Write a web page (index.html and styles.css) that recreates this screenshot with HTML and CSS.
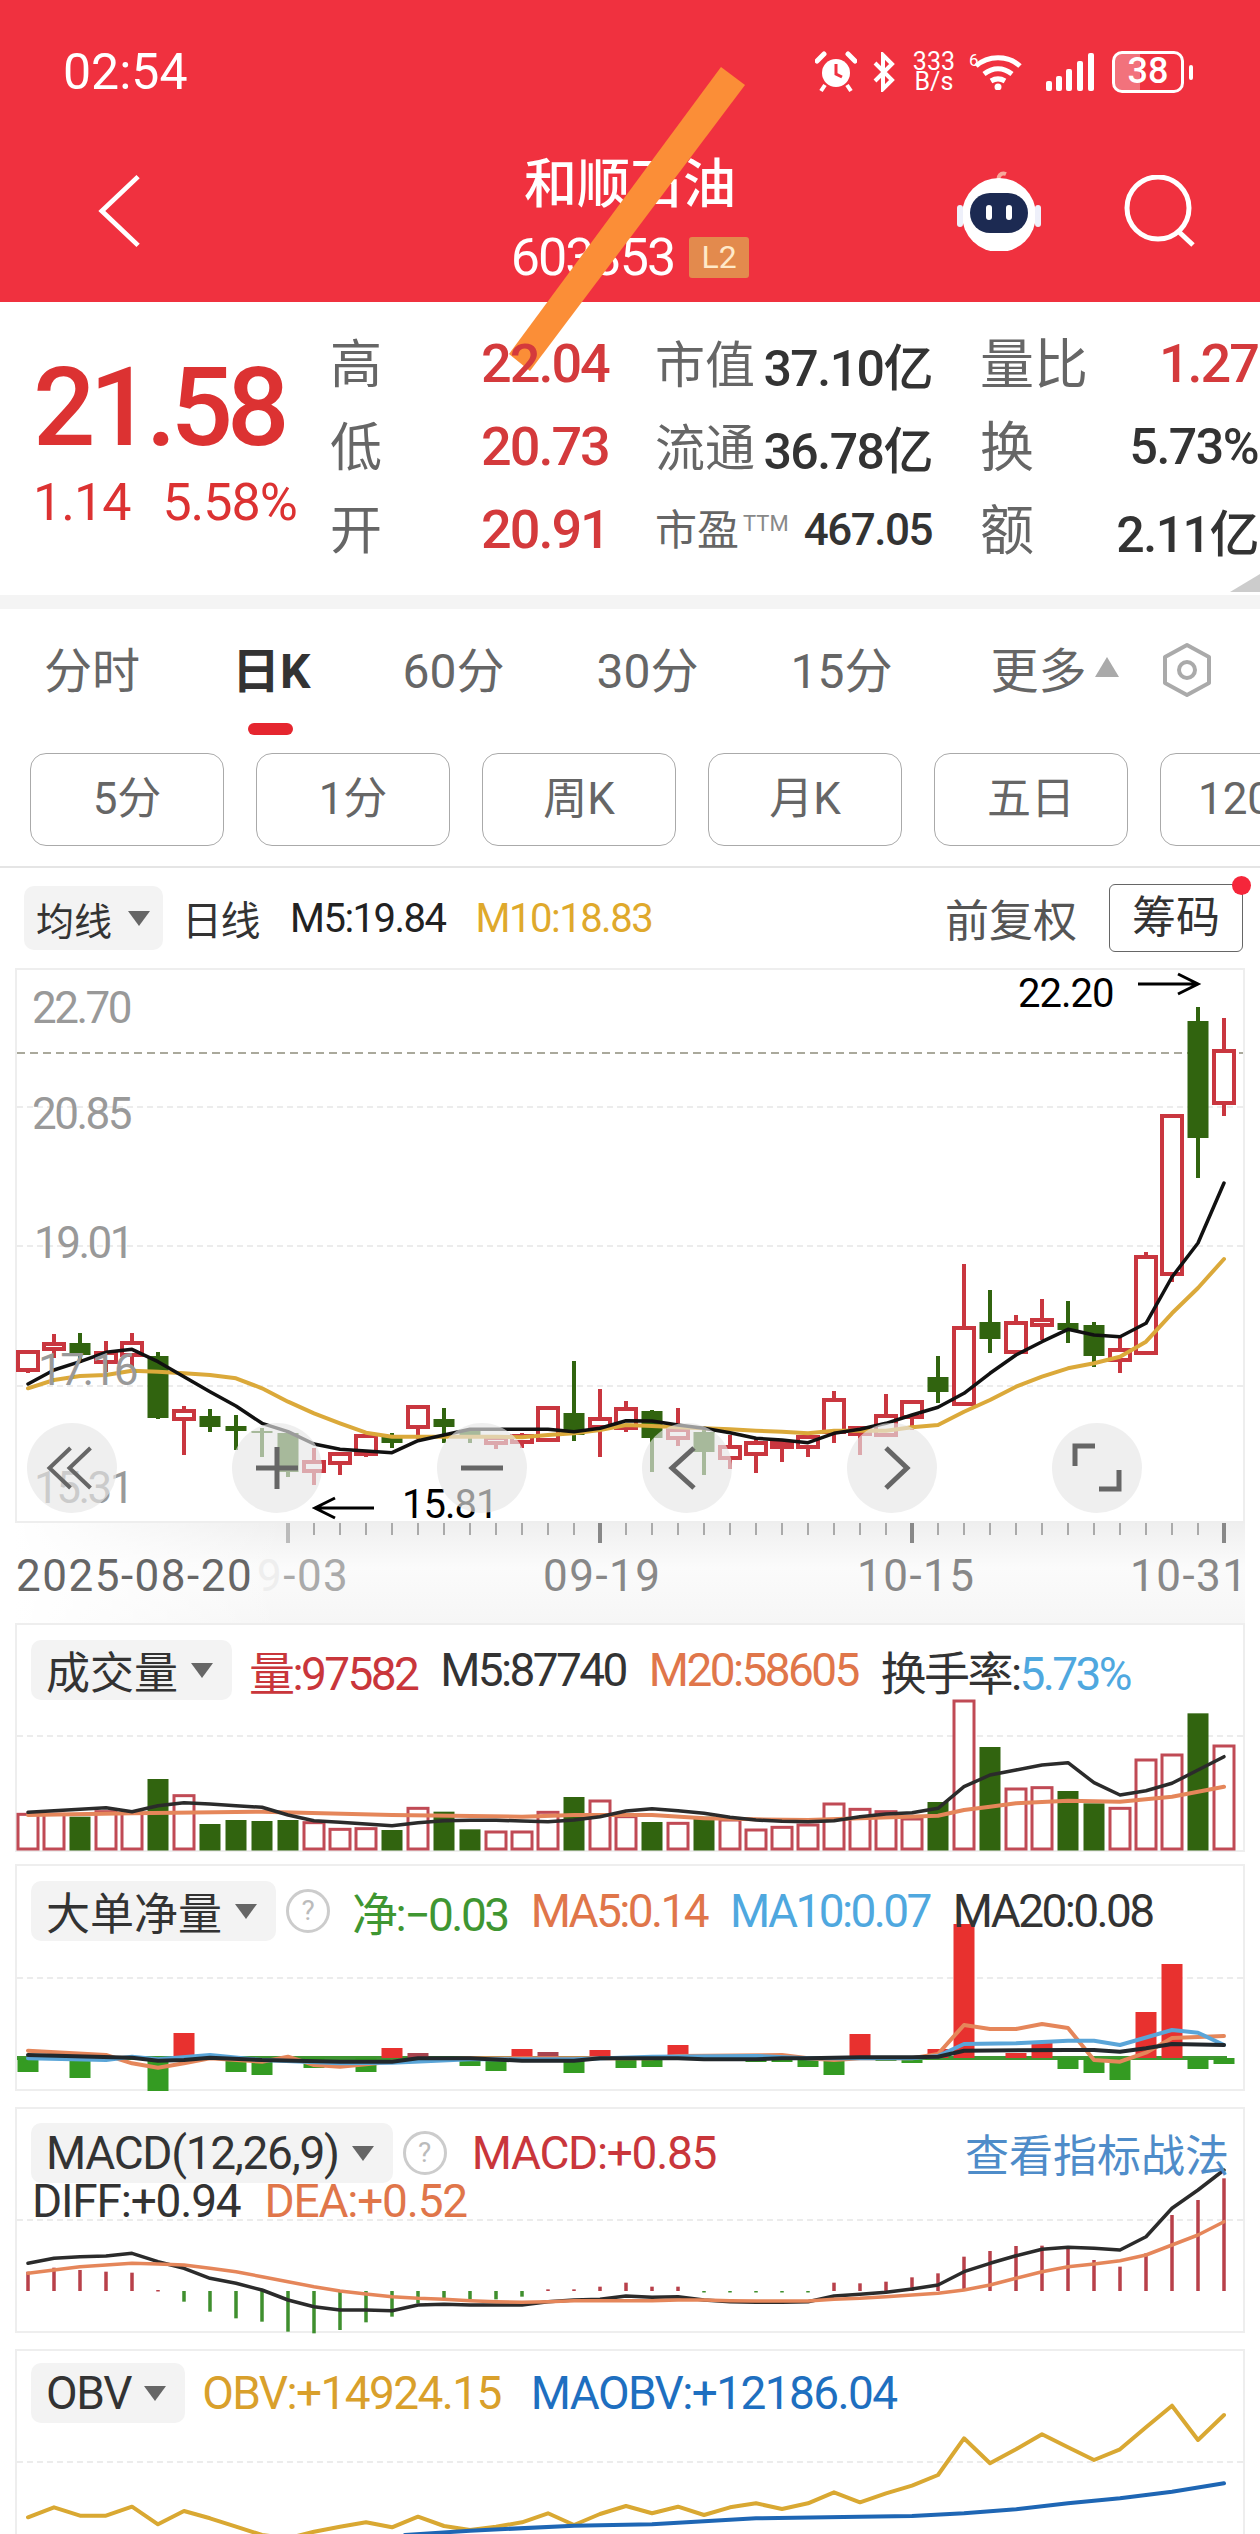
FILE: index.html
```html
<!DOCTYPE html>
<html lang="zh">
<head>
  <meta charset="UTF-8">
  <title>和顺石油 603353</title>
  <link rel="stylesheet" href="styles.css">
</head>
<body>
  <div class="page">
    <header class="top">
      <div class="status">
        <span class="time">02:54</span>
        <div class="status-icons">
          <svg class="ic-alarm" viewBox="0 0 42 42"><circle cx="21" cy="22" r="14" fill="#fff"/><path d="M21 13v10l6 3" fill="none" stroke="#f0313f" stroke-width="3"/><path d="M2 10 9 3M40 10 33 3" stroke="#fff" stroke-width="5" stroke-linecap="round"/><path d="M10 34 6 40M32 34l4 6" stroke="#fff" stroke-width="4"/></svg>
          <svg class="ic-bt" viewBox="0 0 24 40"><path d="M3 11 20 28 11 37V3l9 9L3 29" fill="none" stroke="#fff" stroke-width="4"/></svg>
          <span class="speed">333<br>B/s</span>
          <span class="wifi">
            <span class="wifi-six">6</span>
            <svg class="ic-wifi" viewBox="0 0 50 36"><path d="M3 12C15 1 35 1 47 12M11 20c9-7 19-7 28 0M18 27c5-3 9-3 14 0" fill="none" stroke="#fff" stroke-width="5"/><circle cx="25" cy="33" r="3.5" fill="#fff"/></svg>
          </span>
          <svg class="ic-signal" viewBox="0 0 48 38"><g fill="#fff"><rect x="0" y="28" width="6" height="10" rx="2"/><rect x="10" y="23" width="6" height="15" rx="2"/><rect x="20" y="16" width="6" height="22" rx="2"/><rect x="31" y="8" width="6" height="30" rx="2"/><rect x="42" y="0" width="6" height="38" rx="2"/></g></svg>
          <div class="battery"><span class="battery-box">38</span><i class="battery-tip"></i></div>
        </div>
      </div>
      <nav class="nav">
        <svg class="ic-back" viewBox="0 0 44 76"><path d="M42 2 4 38l38 36" fill="none" stroke="#fff" stroke-width="5"/></svg>
        <div class="title">
          <div class="name">和顺石油</div>
          <div class="code">603353<span class="badge">L2</span></div>
        </div>
        <div class="nav-right">
          <svg class="ic-robot" viewBox="0 0 88 80">
            <path d="M44 12C42 5 46 1 51 3" fill="none" stroke="#f7a99c" stroke-width="4"/>
            <circle cx="44" cy="44" r="37" fill="#fff"/>
            <rect x="2" y="34" width="6" height="22" rx="3" fill="#eef0fa"/>
            <rect x="80" y="34" width="6" height="22" rx="3" fill="#eef0fa"/>
            <rect x="15" y="22" width="58" height="40" rx="20" fill="#1c2a52"/>
            <rect x="31" y="34" width="6" height="15" rx="3" fill="#fff"/>
            <rect x="51" y="34" width="6" height="15" rx="3" fill="#fff"/>
          </svg>
          <svg class="ic-search" viewBox="0 0 72 72"><circle cx="35" cy="33" r="31" fill="none" stroke="#fff" stroke-width="5"/><path d="M55 56 70 70" stroke="#fff" stroke-width="5"/></svg>
        </div>
      </nav>
    </header>
    <div class="stripe"></div>

    <section class="quote">
      <div class="quote-main">
        <div class="price">21.58</div>
        <div class="change"><span>1.14</span><span>5.58%</span></div>
      </div>
      <div class="quote-grid">
        <span class="lb mid">高</span><span class="val up">22.04</span>
        <div class="cell cell-mid"><span class="lb">市值</span><span class="val dark">37.10亿</span></div>
        <div class="cell"><span class="lb big">量比</span><span class="val up">1.27</span></div>
        <span class="lb mid">低</span><span class="val up">20.73</span>
        <div class="cell cell-mid"><span class="lb">流通</span><span class="val dark">36.78亿</span></div>
        <div class="cell"><span class="lb big">换</span><span class="val dark">5.73%</span></div>
        <span class="lb mid">开</span><span class="val up">20.91</span>
        <div class="cell cell-mid"><span class="lb small">市盈<sup>TTM</sup></span><span class="val dark small">467.05</span></div>
        <div class="cell"><span class="lb big">额</span><span class="val dark">2.11亿</span></div>
      </div>
      <i class="corner"></i>
    </section>

    <div class="tabs">
      <span>分时</span>
      <span class="active">日K</span>
      <span>60分</span>
      <span>30分</span>
      <span>15分</span>
      <span class="more">更多<i class="tri-up"></i></span>
      <svg class="ic-hex" viewBox="0 0 56 56"><path d="M28 3 50 15V41L28 53 6 41V15Z" fill="none" stroke="#aaa" stroke-width="4" stroke-linejoin="round"/><circle cx="28" cy="28" r="8" fill="none" stroke="#aaa" stroke-width="4"/></svg>
    </div>

    <div class="subtabs">
      <span>5分</span>
      <span>1分</span>
      <span>周K</span>
      <span>月K</span>
      <span>五日</span>
      <span>120分</span>
    </div>

    <div class="chart-head">
      <div class="chip chip-sm">均线<i class="tri"></i></div>
      <span class="day">日线</span>
      <span class="m5">M5:19.84</span>
      <span class="m10">M10:18.83</span>
      <span class="adjust">前复权</span>
      <span class="chips-btn">筹码<i class="dot"></i></span>
    </div>

    <div class="panel panel-main">
      <svg id="mainChart" class="plot"></svg>
      <div class="ctrl">
        <span class="ctrl-btn"><svg viewBox="0 0 90 90"><path d="M43.5 25 22.5 45l21 20M63.5 25 42.5 45l21 20"/></svg></span>
        <span class="ctrl-btn"><svg viewBox="0 0 90 90"><path class="thick" d="M24 45H66M45 24V66"/></svg></span>
        <span class="ctrl-btn"><svg viewBox="0 0 90 90"><path class="thick" d="M24 45H66"/></svg></span>
        <span class="ctrl-btn"><svg viewBox="0 0 90 90"><path class="thick" d="M52 25 30 45l22 20"/></svg></span>
        <span class="ctrl-btn"><svg viewBox="0 0 90 90"><path class="thick" d="M39 25 60 45 39 65"/></svg></span>
        <span class="ctrl-btn"><svg viewBox="0 0 90 90"><path class="thick" d="M23 43V23H43M47 66H67V47"/></svg></span>
      </div>
    </div>
    <div class="axis"><svg id="axisChart" class="plot"></svg></div>

    <div class="panel panel-vol">
      <svg id="volChart" class="plot"></svg>
      <div class="legend">
        <div class="chip">成交量<i class="tri"></i></div>
        <span class="c-red">量:97582</span>
        <span class="c-dark">M5:87740</span>
        <span class="c-orange">M20:58605</span>
        <span class="c-dark">换手率:<b class="c-blue">5.73%</b></span>
      </div>
    </div>

    <div class="panel panel-big">
      <svg id="bigChart" class="plot"></svg>
      <div class="legend">
        <div class="chip">大单净量<i class="tri"></i></div>
        <i class="help">?</i>
        <span class="c-green net">净:−0.03</span>
        <span class="c-orange">MA5:0.14</span>
        <span class="c-blue">MA10:0.07</span>
        <span class="c-dark">MA20:0.08</span>
      </div>
    </div>

    <div class="panel panel-macd">
      <svg id="macdChart" class="plot"></svg>
      <div class="legend">
        <div class="chip chip-en">MACD(12,26,9)<i class="tri"></i></div>
        <i class="help">?</i>
        <span class="c-red macd-val">MACD:+0.85</span>
        <span class="tactic">查看指标战法</span>
      </div>
      <div class="legend-two">
        <span class="c-dark">DIFF:+0.94</span>
        <span class="c-orange">DEA:+0.52</span>
      </div>
    </div>

    <div class="panel panel-obv">
      <svg id="obvChart" class="plot"></svg>
      <div class="legend legend-obv">
        <div class="chip chip-en">OBV<i class="tri"></i></div>
        <span class="c-gold">OBV:+14924.15</span>
        <span class="c-navy">MAOBV:+12186.04</span>
      </div>
    </div>
  </div>
  <script src="charts.js"></script>
</body>
</html>
```
FILE: styles.css
```css
* {
  box-sizing: border-box;
}
html, body {
  margin: 0;
  padding: 0;
  background: #fff;
}
body {
  font-family: Roboto, "Noto Sans CJK SC", sans-serif;
  color: #333;
}
.page {
  position: relative;
  width: 1260px;
  height: 2534px;
  overflow: hidden;
}

/* red header */
.top {
  height: 302px;
  padding-top: 42px;
  background: #f0313f;
  color: #fff;
}
.status {
  display: flex;
  justify-content: space-between;
  align-items: center;
  height: 60px;
  padding: 0 67px 0 63px;
}
.time {
  font-size: 50px;
}
.status-icons {
  display: flex;
  align-items: center;
}
.ic-alarm { width: 42px; height: 42px; }
.ic-bt { width: 26px; height: 40px; margin-left: 14px; }
.speed {
  margin-left: 16px;
  font-size: 25px;
  line-height: 20px;
  text-align: center;
}
.wifi {
  position: relative;
  margin-left: 18px;
}
.wifi-six {
  position: absolute;
  left: -4px;
  top: -4px;
  font-size: 17px;
}
.ic-wifi { display: block; width: 50px; height: 36px; }
.ic-signal { width: 48px; height: 38px; margin-left: 23px; }
.battery {
  display: flex;
  align-items: center;
  margin-left: 18px;
}
.battery-box {
  width: 72px;
  height: 42px;
  border: 3px solid #fff;
  border-radius: 10px;
  background: linear-gradient(90deg, #f2727c 38%, #f0313f 38%);
  font-size: 36px;
  font-weight: 500;
  line-height: 35px;
  text-align: center;
}
.battery-tip {
  width: 4px;
  height: 15px;
  margin-left: 5px;
  background: #fff;
  border-radius: 2px;
}
.nav {
  display: grid;
  grid-template-columns: 1fr auto 1fr;
  align-items: center;
  margin-top: 55px;
  padding: 0 65px;
}
.ic-back {
  width: 42px;
  height: 74px;
  margin: 0 0 14px 33px;
}
.title {
  text-align: center;
}
.name {
  font-size: 53px;
  font-weight: 500;
  line-height: 56px;
}
.code {
  display: flex;
  align-items: center;
  margin-top: 23px;
  height: 42px;
  font-size: 52px;
  letter-spacing: -2px;
}
.badge {
  width: 60px;
  height: 41px;
  margin-left: 15px;
  background: #e38a4d;
  border-radius: 3px;
  color: #ffe9c9;
  font-size: 32px;
  letter-spacing: 0;
  line-height: 41px;
  text-align: center;
}
.nav-right {
  display: flex;
  justify-content: flex-end;
  align-items: center;
  gap: 80px;
  margin-bottom: 14px;
}
.ic-robot { width: 88px; height: 80px; }
.ic-search { width: 72px; height: 72px; }

.stripe {
  position: absolute;
  left: 500px;
  top: 60px;
  width: 250px;
  height: 320px;
  background: #fb8e37;
  clip-path: polygon(221px 7px, 245px 25px, 30px 311px, 9px 294px);
}

/* quote block */
.quote {
  position: relative;
  display: flex;
  height: 307px;
  padding-top: 20px;
  border-bottom: 14px solid #f4f4f4;
}
.quote-main {
  width: 330px;
  padding: 36px 0 0 33px;
  color: #dc3232;
}
.price {
  font-size: 110px;
  font-weight: 500;
  line-height: 100px;
  letter-spacing: -6px;
}
.change {
  display: flex;
  gap: 32px;
  margin-top: 20px;
  font-size: 52px;
  line-height: 50px;
  letter-spacing: -1px;
}
.quote-grid {
  display: grid;
  grid-template-columns: 151px 174px 325px 278px;
  grid-auto-rows: 83px;
  align-items: center;
  white-space: nowrap;
}
.cell {
  display: flex;
  justify-content: space-between;
  align-items: center;
}
.cell-mid {
  padding-right: 48px;
}
.lb {
  margin-bottom: 6px;
  color: #666;
  font-size: 50px;
}
.lb.mid {
  font-size: 52px;
}
.lb.big {
  font-size: 54px;
}
.lb.small {
  font-size: 42px;
}
.lb sup {
  margin-left: 4px;
  font-size: 22px;
  color: #888;
  vertical-align: 14px;
  line-height: 0;
}
.val {
  font-size: 54px;
  font-weight: 500;
  letter-spacing: -2px;
}
.val.dark {
  font-size: 50px;
  letter-spacing: -1.5px;
}
.val.small {
  font-size: 44px;
}
.up { color: #d43a3c; }
.dark { color: #333; }
.corner {
  position: absolute;
  right: 0;
  bottom: 3px;
  border-style: solid;
  border-width: 0 0 18px 30px;
  border-color: transparent transparent #ccc transparent;
}

/* period tabs */
.tabs {
  position: relative;
  display: flex;
  align-items: center;
  gap: 92px;
  height: 62px;
  margin-top: 27px;
  padding-left: 44px;
  color: #666;
  font-size: 48px;
}
.tabs .active {
  position: relative;
  color: #333;
  font-weight: 700;
}
.tabs .active::after {
  content: "";
  position: absolute;
  left: 16px;
  bottom: -33px;
  width: 45px;
  height: 12px;
  background: #e5262f;
  border-radius: 6px;
}
.more {
  display: flex;
  align-items: center;
  margin-left: 6px;
}
.tri-up {
  margin-left: 9px;
  border-style: solid;
  border-width: 0 12px 20px 12px;
  border-color: transparent transparent #aaa transparent;
}
.ic-hex {
  position: absolute;
  left: 1159px;
  top: 6px;
  width: 56px;
  height: 56px;
}
.subtabs {
  display: flex;
  gap: 32px;
  height: 93px;
  margin-top: 55px;
  padding-left: 30px;
  overflow: hidden;
}
.subtabs span {
  flex: 0 0 194px;
  border: 1px solid #aaa;
  border-radius: 16px;
  color: #666;
  font-size: 44px;
  line-height: 91px;
  text-align: center;
}
.chart-head {
  display: flex;
  align-items: center;
  height: 102px;
  margin-top: 20px;
  padding: 0 17px 0 24px;
  border-top: 2px solid #e5e5e5;
  font-size: 40px;
  letter-spacing: -1.5px;
}

/* chips and legends */
.chip {
  display: flex;
  align-items: center;
  gap: 13px;
  height: 60px;
  padding: 0 19px 0 15px;
  background: #f3f3f3;
  border-radius: 10px;
  color: #333;
  font-size: 44px;
  letter-spacing: 0;
  white-space: nowrap;
}
.chip-sm {
  height: 64px;
  padding: 0 13px 0 12px;
  font-size: 38px;
  gap: 16px;
}
.chip-en {
  font-size: 46px;
  letter-spacing: -1.3px;
}
.tri {
  border-style: solid;
  border-width: 15px 11px 0 11px;
  border-color: #666 transparent transparent transparent;
}
.day { margin-left: 19px; }
.m5 { margin-left: 31px; color: #222; }
.m10 { margin-left: 30px; color: #dfa92c; }
.adjust {
  margin-left: auto;
  color: #555;
  font-size: 44px;
  letter-spacing: 0;
}
.chips-btn {
  position: relative;
  width: 134px;
  height: 68px;
  margin-left: 32px;
  border: 1px solid #666;
  border-radius: 6px;
  font-size: 44px;
  letter-spacing: 0;
  line-height: 66px;
  text-align: center;
}
.dot {
  position: absolute;
  right: -9px;
  top: -9px;
  width: 19px;
  height: 19px;
  background: #f5263a;
  border-radius: 50%;
}

/* chart panels */
.panel {
  position: relative;
  margin: 0 15px;
  border: 2px solid #eee;
}
.plot {
  display: block;
  position: absolute;
  left: 0;
  top: 0;
  width: 100%;
  height: 100%;
  overflow: visible;
}
.panel-main { height: 555px; }
.panel-vol { height: 229px; }
.panel-big { height: 227px; margin-top: 12px; }
.panel-macd { height: 226px; margin-top: 16px; }
.panel-obv { height: 240px; margin-top: 16px; }
.axis {
  position: relative;
  height: 100px;
  margin: 0 15px;
  background:
    linear-gradient(90deg, #fff, rgba(255, 255, 255, 0) 22%),
    linear-gradient(#efefef, #fbfbfb 45%, #f6f6f6);
}
.legend {
  position: absolute;
  left: 14px;
  right: 14px;
  top: 12px;
  display: flex;
  align-items: center;
  gap: 23px;
  font-size: 46px;
  letter-spacing: -2.6px;
  white-space: nowrap;
}
.legend .chip + span {
  margin-left: -6px;
}
.legend b {
  font-weight: 400;
}
.legend-two {
  position: absolute;
  left: 15px;
  top: 70px;
  display: flex;
  gap: 24px;
  font-size: 46px;
  letter-spacing: -1.2px;
  line-height: 44px;
}
.legend-obv {
  gap: 30px;
  letter-spacing: -1.6px;
}
.legend-obv .chip + span {
  margin-left: -13px;
}
.net {
  letter-spacing: -2.5px;
}
.macd-val {
  margin-left: 3px;
  letter-spacing: -1.3px;
}
.help {
  width: 44px;
  height: 44px;
  margin: 0 -1px 0 -13px;
  border: 3px solid #ccc;
  border-radius: 50%;
  color: #bbb;
  font-size: 28px;
  font-style: normal;
  letter-spacing: 0;
  line-height: 38px;
  text-align: center;
}
.tactic {
  margin-left: auto;
  color: #4e8cc9;
  font-size: 44px;
  letter-spacing: 0;
}
.c-red { color: #c9363b; }
.c-dark { color: #333; }
.c-orange { color: #e0764a; }
.c-blue { color: #4fa8df; }
.c-green { color: #3f9632; }
.c-gold { color: #d9a02b; }
.c-navy { color: #1e6fc0; }

/* floating chart buttons */
.ctrl {
  position: absolute;
  left: 10px;
  top: 453px;
  display: flex;
  gap: 115px;
}
.ctrl-btn {
  width: 90px;
  height: 90px;
  background: rgba(230, 230, 230, 0.65);
  border-radius: 50%;
}
.ctrl-btn svg {
  display: block;
  fill: none;
  stroke: #666;
  stroke-width: 4;
}
.ctrl-btn .thick {
  stroke-width: 5;
}

/* svg text */
.t-price { fill: #999; font-size: 44px; letter-spacing: -2.5px; }
.t-mark { fill: #000; font-size: 40px; letter-spacing: -1px; }
.t-date { fill: #666; font-size: 44px; letter-spacing: 1.5px; }
.t-date-lt { fill: #888; font-size: 44px; letter-spacing: 1.5px; }
.t-fade { fill: #eee; font-size: 44px; letter-spacing: 1.5px; }
.t-fade2 { fill: #aaa; font-size: 44px; letter-spacing: 1.5px; }
```
FILE: charts.js
```js
// bar positions: 47 trading days, 26px apart
const RED = "#c9363f";
const GREEN = "#31640f";

function barX(i) {
  return 28 + i * 26;
}

function svgOpen(id, x, y, w, h) {
  const el = document.getElementById(id);
  el.setAttribute("viewBox", `${x} ${y} ${w} ${h}`);
  return el;
}

function dash(y, strong) {
  if (strong) {
    return `<line x1="17" x2="1243" y1="${y}" y2="${y}" stroke="#aaa99c" stroke-width="2" stroke-dasharray="8 5"/>`;
  }
  return `<line x1="17" x2="1243" y1="${y}" y2="${y}" stroke="#e6e6e6" stroke-width="1.5" stroke-dasharray="6 4"/>`;
}

// pts: [[barIndex, y], ...] with y in thirds of a pixel from base
function line(pts, base, color, width) {
  const p = pts.map(([i, v]) => `${barX(i)},${(base + v / 3).toFixed(1)}`).join(" ");
  return `<polyline points="${p}" fill="none" stroke="${color}" stroke-width="${width}" stroke-linejoin="round" stroke-linecap="round"/>`;
}

function series(values) {
  return values.map((v, i) => [i, v]);
}

function candle(i, c) {
  const [kind, hi, lo, top, bottom] = c;
  const x = barX(i);
  const color = kind === "r" ? RED : GREEN;
  let s = `<line x1="${x}" x2="${x}" y1="${hi}" y2="${lo}" stroke="${color}" stroke-width="4"/>`;
  if (kind === "r") {
    s += `<rect x="${x - 10}" y="${top}" width="20" height="${bottom - top}" fill="#fff" stroke="${color}" stroke-width="4"/>`;
  } else {
    s += `<rect x="${x - 10.5}" y="${top}" width="21" height="${bottom - top}" fill="${color}"/>`;
  }
  return s;
}

const candles = [
  ["r", 1350, 1373, 1352, 1370], ["r", 1334, 1358, 1344, 1349], ["g", 1333, 1363, 1343, 1355],
  ["r", 1341, 1372, 1353, 1362], ["r", 1333, 1367, 1343, 1355], ["g", 1352, 1419, 1356, 1418],
  ["r", 1406, 1455, 1411, 1419], ["g", 1409, 1432, 1416, 1427], ["g", 1415, 1450, 1426, 1431],
  ["g", 1428, 1457, 1431, 1433], ["g", 1432, 1477, 1433, 1472], ["r", 1448, 1485, 1462, 1471],
  ["r", 1453, 1475, 1454, 1463], ["r", 1434, 1457, 1436, 1454], ["g", 1433, 1448, 1437, 1443],
  ["r", 1405, 1439, 1407, 1427], ["g", 1408, 1443, 1419, 1427], ["g", 1428, 1443, 1430, 1437],
  ["r", 1437, 1449, 1438, 1443], ["r", 1433, 1448, 1436, 1442], ["r", 1406, 1442, 1408, 1440],
  ["g", 1361, 1441, 1413, 1435], ["r", 1389, 1457, 1419, 1427], ["r", 1401, 1432, 1409, 1428],
  ["g", 1410, 1472, 1411, 1438], ["r", 1408, 1446, 1430, 1438], ["g", 1430, 1475, 1432, 1452],
  ["r", 1435, 1469, 1447, 1458], ["r", 1437, 1473, 1443, 1454], ["r", 1442, 1462, 1443, 1447],
  ["r", 1433, 1457, 1437, 1447], ["r", 1391, 1443, 1400, 1432], ["r", 1426, 1455, 1428, 1434],
  ["r", 1394, 1437, 1416, 1435], ["r", 1400, 1430, 1402, 1417], ["g", 1356, 1403, 1377, 1392],
  ["r", 1264, 1404, 1328, 1404], ["g", 1290, 1353, 1322, 1339], ["r", 1315, 1352, 1323, 1352],
  ["r", 1299, 1340, 1320, 1325], ["g", 1301, 1343, 1323, 1330], ["g", 1322, 1367, 1325, 1356],
  ["r", 1337, 1373, 1350, 1360], ["r", 1252, 1353, 1257, 1353], ["r", 1116, 1282, 1116, 1274],
  ["g", 1007, 1178, 1021, 1138], ["r", 1018, 1116, 1051, 1103]
];

const maFive = [192, 150, 125, 97, 88, 125, 170, 215, 258, 310, 335, 372, 388, 393, 398, 362, 345, 328, 328, 328, 328, 335, 325, 302,
  303, 315, 325, 338, 355, 360, 368, 340, 328, 310, 285, 262, 220, 160, 105, 65, 28, 45, 50, 10, -129, -231, -411];
const maTen = [205, 180, 168, 165, 152, 155, 160, 165, 175, 205, 245, 280, 310, 338, 350, 350, 350, 350, 350, 352, 345, 340, 330, 315,
  318, 322, 325, 328, 332, 335, 340, 332, 332, 332, 322, 315, 275, 240, 200, 170, 145, 130, 110, 65, -20, -96, -183];

function drawMain() {
  const el = svgOpen("mainChart", 17, 970, 1226, 551);
  let s = dash(1053, true) + dash(1107) + dash(1246) + dash(1386);
  candles.forEach((c, i) => { s += candle(i, c); });
  s += line(series(maTen), 1320, "#dba93a", 4);
  s += line(series(maFive), 1320, "#111", 3.5);
  s += `<text class="t-price" x="32" y="1023">22.70</text>`;
  s += `<text class="t-price" x="32" y="1129">20.85</text>`;
  s += `<text class="t-price" x="34" y="1258">19.01</text>`;
  s += `<text class="t-price" x="38" y="1385">17.16</text>`;
  s += `<text class="t-price" x="34" y="1503">15.31</text>`;
  s += `<text class="t-mark" x="1018" y="1007">22.20</text>`;
  s += `<path d="M1138 984H1198M1178 974l20 10-20 10" fill="none" stroke="#000" stroke-width="3"/>`;
  s += `<text class="t-mark" x="402" y="1518">15.81</text>`;
  s += `<path d="M374 1508H315M335 1498l-20 10 20 10" fill="none" stroke="#000" stroke-width="3"/>`;
  el.innerHTML = s;
}

function drawAxis() {
  const el = svgOpen("axisChart", 15, 1523, 1230, 100);
  let s = "";
  for (let i = 10; i <= 46; i++) {
    const major = (i - 10) % 12 === 0;
    const color = i === 10 ? "#bbb" : major ? "#888" : "#aaa";
    s += `<line x1="${barX(i)}" x2="${barX(i)}" y1="1523" y2="${major ? 1543 : 1535}" stroke="${color}" stroke-width="${major ? 4 : 2}"/>`;
  }
  s += `<text class="t-date" x="16" y="1591">2025-08-20</text>`;
  s += `<text class="t-fade" x="257" y="1591">9<tspan class="t-fade2">-03</tspan></text>`;
  s += `<text class="t-date-lt" x="543" y="1591">09-19</text>`;
  s += `<text class="t-date-lt" x="857" y="1591">10-15</text>`;
  s += `<text class="t-date-lt" x="1130" y="1591">10-31</text>`;
  el.innerHTML = s;
}

function drawVol() {
  const el = svgOpen("volChart", 17, 1625, 1226, 225);
  const tops = [
    ["r", 583], ["r", 583], ["g", 590], ["r", 575], ["r", 580], ["g", 477], ["r", 527], ["g", 612], ["g", 600], ["g", 603],
    ["g", 600], ["r", 608], ["r", 628], ["r", 626], ["g", 630], ["r", 565], ["g", 575], ["g", 628], ["r", 636], ["r", 636],
    ["r", 577], ["g", 531], ["r", 543], ["r", 590], ["g", 606], ["r", 610], ["g", 590], ["r", 600], ["r", 630], ["r", 622],
    ["r", 615], ["r", 552], ["r", 568], ["r", 575], ["r", 597], ["g", 546], ["r", 243], ["g", 381], ["r", 507], ["r", 503],
    ["g", 513], ["g", 550], ["r", 565], ["r", 420], ["r", 405], ["g", 280], ["r", 378]
  ];
  let s = dash(1736);
  tops.forEach(([kind, v], i) => {
    const y = 1620 + v / 3;
    const x = barX(i);
    if (kind === "r") {
      s += `<rect x="${x - 10}" y="${y}" width="20" height="${1849 - y}" fill="#fff" stroke="#c04a55" stroke-width="3"/>`;
    } else {
      s += `<rect x="${x - 10.5}" y="${y}" width="21" height="${1850.5 - y}" fill="${GREEN}"/>`;
    }
  });
  const m5 = [577, 572, 568, 563, 575, 557, 548, 552, 557, 562, 585, 602, 607, 612, 617, 608, 602, 601, 601, 603, 605, 600, 590, 573,
    566, 572, 580, 592, 600, 604, 605, 602, 590, 582, 578, 565, 500, 465, 450, 435, 428, 488, 525, 512, 490, 450, 410];
  const m20 = [[0, 585], [4, 580], [9, 575], [14, 585], [19, 590], [21, 585], [24, 585], [26, 595], [28, 598], [30, 600], [32, 595],
    [35, 587], [36, 570], [37, 560], [38, 550], [40, 542], [42, 545], [44, 530], [46, 500]];
  s += line(m20, 1620, "#e5865a", 4);
  s += line(series(m5), 1620, "#2b2b2b", 3.5);
  el.innerHTML = s;
}

function drawBig() {
  const el = svgOpen("bigChart", 17, 1866, 1226, 223);
  const base = 2058;
  let s = dash(1978);
  s += `<rect x="17" y="2056" width="1210" height="4" fill="#3f9632"/>`;
  const reds = { 6: 2033, 14: 2048, 15: 2053, 19: 2049, 20: 2052, 22: 2050, 25: 2045, 32: 2034, 35: 2049, 36: 1924, 38: 2053, 39: 2043, 43: 2012, 44: 1964 };
  const dim = [15, 20];
  Object.keys(reds).forEach((k) => {
    const x = barX(+k);
    s += `<rect x="${x - 10.5}" y="${reds[k]}" width="21" height="${base - reds[k]}" fill="${dim.includes(+k) ? "#a8444f" : "#e8312f"}"/>`;
  });
  const greens = { 0: 2072, 2: 2078, 5: 2091, 8: 2072, 9: 2075, 11: 2068, 13: 2072, 17: 2066, 18: 2071, 21: 2073, 23: 2068, 24: 2067, 28: 2062, 29: 2062, 30: 2067, 31: 2075, 33: 2061, 34: 2063, 40: 2069, 41: 2073, 42: 2080, 45: 2069, 46: 2064 };
  Object.keys(greens).forEach((k) => {
    const x = barX(+k);
    s += `<rect x="${x - 10.5}" y="${base}" width="21" height="${greens[k] - base}" fill="#349b22"/>`;
  });
  const orange = [[0, 62], [3, 75], [4, 100], [5, 113], [6, 100], [7, 85], [9, 95], [10, 80], [11, 105], [12, 110], [14, 95], [17, 85],
    [22, 85], [24, 85], [25, 78], [29, 75], [30, 85], [31, 90], [32, 85], [34, 85], [35, 72], [36, -15], [37, -3], [38, -3], [39, -18],
    [40, -6], [41, 90], [42, 95], [43, 68], [44, 24], [45, 21], [46, 18]];
  const blue = [[0, 85], [3, 90], [4, 80], [5, 88], [7, 75], [9, 90], [12, 100], [14, 98], [17, 88], [21, 88], [24, 80], [28, 78], [30, 85],
    [34, 85], [35, 78], [36, 42], [38, 40], [40, 32], [41, 32], [42, 45], [44, 0], [45, 8], [46, 45]];
  const dark = [[0, 75], [4, 83], [5, 92], [6, 90], [7, 83], [9, 90], [12, 95], [14, 95], [15, 85], [17, 85], [19, 92], [21, 92], [22, 85],
    [24, 85], [25, 85], [26, 88], [28, 88], [29, 85], [30, 85], [32, 82], [34, 82], [35, 80], [36, 62], [40, 60], [41, 60], [42, 65],
    [43, 55], [44, 42], [46, 45]];
  s += line(orange, 2030, "#e5865a", 4);
  s += line(blue, 2030, "#5aa5d8", 4);
  s += line(dark, 2030, "#22282c", 4);
  el.innerHTML = s;
}

function drawMacd() {
  const el = svgOpen("macdChart", 17, 2109, 1226, 222);
  const tips = [545, 533, 540, 545, 548, 600, 635, 665, 685, 695, 725, 730, 720, 697, 680, 640, 630, 628, 628, 620, 598, 598, 590, 578,
    590, 590, 605, 607, 607, 607, 607, 578, 580, 575, 562, 550, 500, 483, 468, 467, 475, 510, 530, 490, 375, 330, 265];
  let s = dash(2220);
  tips.forEach((v, i) => {
    const y = 2090 + v / 3;
    const x = barX(i);
    const color = v < 602 ? "#b8404a" : "#3f8f2e";
    s += `<rect x="${x - 1.75}" y="${Math.min(y, 2291)}" width="3.5" height="${Math.max(Math.abs(y - 2291), 1.5)}" fill="${color}"/>`;
  });
  const diff = [520, 505, 500, 498, 490, 515, 535, 565, 580, 600, 630, 650, 660, 660, 662, 645, 643, 645, 645, 645, 635, 630, 628, 618,
    622, 620, 630, 635, 637, 637, 635, 618, 613, 607, 597, 585, 545, 520, 497, 478, 472, 475, 480, 440, 355, 300, 240];
  const dea = [550, 540, 530, 525, 520, 522, 525, 535, 545, 560, 575, 590, 603, 612, 620, 625, 628, 632, 635, 637, 635, 632, 632, 632,
    632, 630, 630, 632, 633, 633, 633, 628, 625, 620, 615, 610, 600, 585, 565, 545, 530, 522, 512, 495, 465, 435, 395];
  s += line(series(diff), 2090, "#2b2b2b", 3.5);
  s += line(series(dea), 2090, "#e5865a", 3.5);
  el.innerHTML = s;
}

function drawObv() {
  const el = svgOpen("obvChart", 17, 2351, 1226, 236);
  const obv = [1282, 1252, 1277, 1277, 1250, 1303, 1263, 1285, 1310, 1335, 1345, 1325, 1310, 1297, 1312, 1280, 1308, 1320, 1310, 1297, 1270, 1305, 1272, 1248,
    1270, 1250, 1275, 1252, 1240, 1257, 1240, 1207, 1237, 1210, 1187, 1155, 1045, 1120, 1078, 1033, 1072, 1110, 1078, 1012, 947, 1050, 975];
  const ma = [[14.5, 1335], [17, 1322], [21, 1307], [24, 1303], [28, 1285], [32, 1280], [34, 1278], [36, 1270], [38, 1258], [40, 1240], [42, 1225], [44, 1205], [46, 1180]];
  let s = dash(2462);
  s += line(series(obv), 2090, "#d9a832", 4);
  s += line(ma, 2090, "#1e66b4", 4);
  el.innerHTML = s;
}

drawMain();
drawAxis();
drawVol();
drawBig();
drawMacd();
drawObv();
```
